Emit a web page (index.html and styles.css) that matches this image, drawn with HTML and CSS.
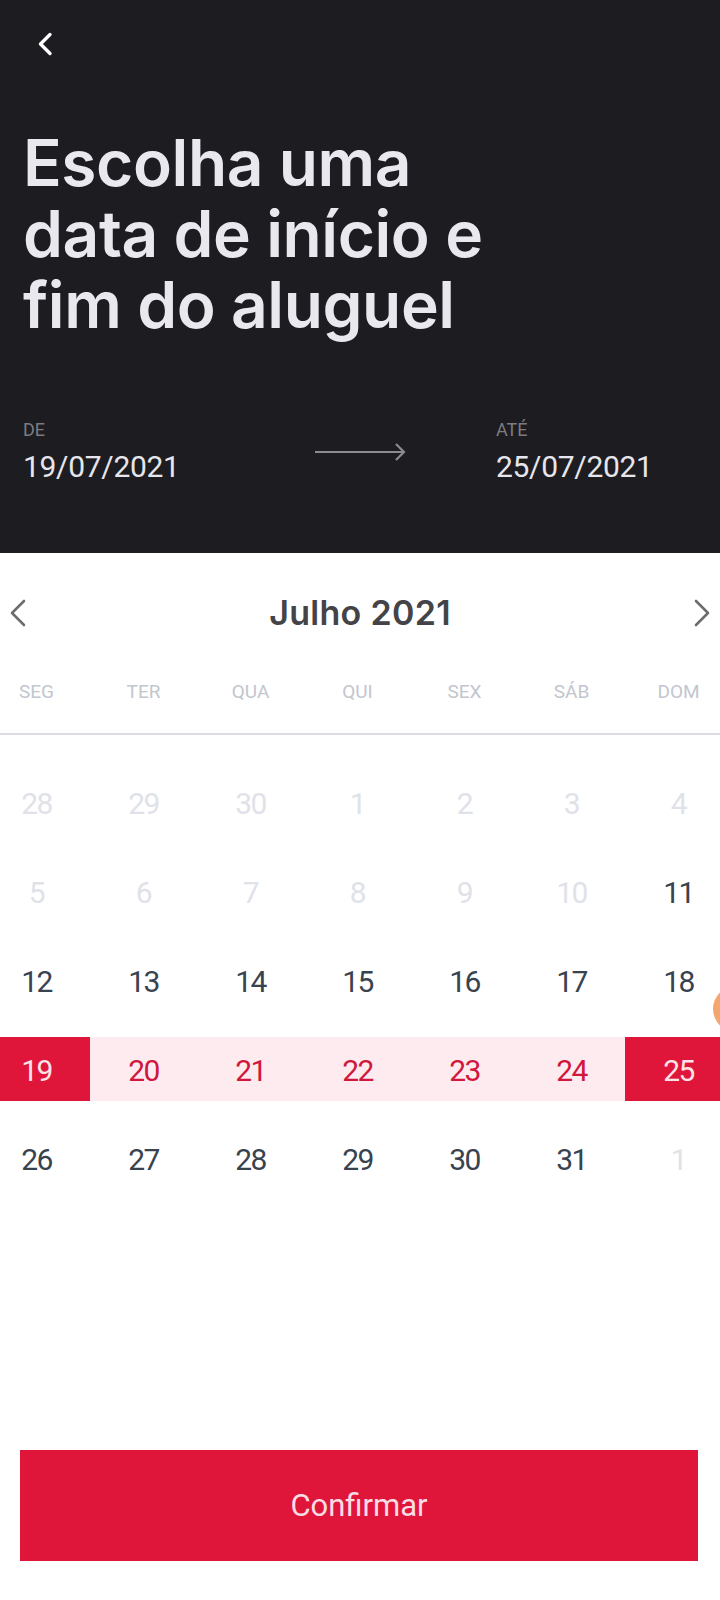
FILE: index.html
```html
<!DOCTYPE html>
<html lang="pt-BR">
<head>
<meta charset="utf-8">
<title>Escolha uma data</title>
<link rel="stylesheet" href="styles.css">
</head>
<body>
<div class="screen">
  <header class="hero">
    <button class="back" aria-label="Voltar">
      <svg width="16" height="24" viewBox="0 0 16 24"><polyline points="13,2.5 3.5,12 13,21.5" fill="none" stroke="#ffffff" stroke-width="3.4" stroke-linecap="round" stroke-linejoin="round"/></svg>
    </button>
    <h1 class="title">Escolha uma<br>data de início e<br>fim do aluguel</h1>
    <div class="range">
      <div class="range-item">
        <span class="range-label">DE</span>
        <span class="range-date">19/07/2021</span>
      </div>
      <div class="range-arrow">
        <svg width="92" height="22" viewBox="0 0 92 22"><line x1="1" y1="11" x2="90" y2="11" stroke="#8c8c90" stroke-width="2.2"/><polyline points="82,3 90,11 82,19" fill="none" stroke="#8c8c90" stroke-width="2.2"/></svg>
      </div>
      <div class="range-item">
        <span class="range-label">ATÉ</span>
        <span class="range-date">25/07/2021</span>
      </div>
    </div>
  </header>

  <section class="calendar">
    <div class="cal-nav">
      <button class="nav-btn" aria-label="Mês anterior">
        <svg width="18" height="28" viewBox="0 0 18 28"><polyline points="15,2 3,14 15,26" fill="none" stroke="#6c6c70" stroke-width="2.6" stroke-linecap="round" stroke-linejoin="round"/></svg>
      </button>
      <h2 class="month">Julho 2021</h2>
      <button class="nav-btn" aria-label="Próximo mês">
        <svg width="18" height="28" viewBox="0 0 18 28"><polyline points="3,2 15,14 3,26" fill="none" stroke="#6c6c70" stroke-width="2.6" stroke-linecap="round" stroke-linejoin="round"/></svg>
      </button>
    </div>

    <div class="weekdays">
      <span>SEG</span><span>TER</span><span>QUA</span><span>QUI</span><span>SEX</span><span>SÁB</span><span>DOM</span>
    </div>
    <div class="divider"></div>

    <div class="days">
      <div class="day muted"><span class="num">28</span></div>
      <div class="day muted"><span class="num">29</span></div>
      <div class="day muted"><span class="num">30</span></div>
      <div class="day muted"><span class="num">1</span></div>
      <div class="day muted"><span class="num">2</span></div>
      <div class="day muted"><span class="num">3</span></div>
      <div class="day muted"><span class="num">4</span></div>

      <div class="day muted"><span class="num">5</span></div>
      <div class="day muted"><span class="num">6</span></div>
      <div class="day muted"><span class="num">7</span></div>
      <div class="day muted"><span class="num">8</span></div>
      <div class="day muted"><span class="num">9</span></div>
      <div class="day muted"><span class="num">10</span></div>
      <div class="day"><span class="num">11</span></div>

      <div class="day"><span class="num">12</span></div>
      <div class="day"><span class="num">13</span></div>
      <div class="day"><span class="num">14</span></div>
      <div class="day"><span class="num">15</span></div>
      <div class="day"><span class="num">16</span></div>
      <div class="day"><span class="num">17</span></div>
      <div class="day"><span class="num">18</span></div>

      <div class="day selected"><span class="num">19</span></div>
      <div class="day in-range"><span class="num">20</span></div>
      <div class="day in-range"><span class="num">21</span></div>
      <div class="day in-range"><span class="num">22</span></div>
      <div class="day in-range"><span class="num">23</span></div>
      <div class="day in-range"><span class="num">24</span></div>
      <div class="day selected"><span class="num">25</span></div>

      <div class="day"><span class="num">26</span></div>
      <div class="day"><span class="num">27</span></div>
      <div class="day"><span class="num">28</span></div>
      <div class="day"><span class="num">29</span></div>
      <div class="day"><span class="num">30</span></div>
      <div class="day"><span class="num">31</span></div>
      <div class="day muted"><span class="num">1</span></div>
    </div>
  </section>

  <div class="footer">
    <button class="confirm">Confirmar</button>
  </div>

  <div class="touch-dot"></div>
</div>
</body>
</html>
```

FILE: styles.css
```css
* {
  box-sizing: border-box;
}

html, body {
  margin: 0;
  padding: 0;
  background: #ffffff;
}

body {
  font-family: Roboto, "Liberation Sans", Arial, sans-serif;
}

.screen {
  position: relative;
  width: 720px;
  height: 1600px;
  overflow: hidden;
  display: flex;
  flex-direction: column;
  background: #ffffff;
}

button {
  font-family: inherit;
  border: 0;
  background: none;
  padding: 0;
  margin: 0;
  cursor: pointer;
}

/* ---------- header ---------- */
.hero {
  height: 553px;
  flex: 0 0 auto;
  background: #1c1c21;
  padding: 32px 0 0 0;
  display: flex;
  flex-direction: column;
}

.back {
  width: 16px;
  height: 24px;
  margin-left: 37px;
  display: block;
}

.back svg {
  display: block;
}

.title {
  margin: 71px 0 0 23px;
  font-family: Inter, "Liberation Sans", sans-serif;
  font-weight: 600;
  font-size: 64px;
  line-height: 71px;
  letter-spacing: -0.4px;
  color: #e8e8ee;
}

.range {
  margin-top: 80px;
  padding-left: 23px;
  display: grid;
  grid-template-columns: 291px 182px auto;
}

.range-item {
  display: flex;
  flex-direction: column;
}

.range-label {
  font-size: 18px;
  line-height: 20px;
  color: #7b7b80;
}

.range-date {
  margin-top: 9px;
  font-size: 30px;
  line-height: 36px;
  color: #e6e6ec;
  letter-spacing: -0.3px;
}

.range-arrow {
  padding-top: 21px;
}

.range-arrow svg {
  display: block;
}

/* ---------- calendar ---------- */
.calendar {
  flex: 1 1 auto;
  display: flex;
  flex-direction: column;
}

.cal-nav {
  margin-top: 30px;
  height: 60px;
  padding: 0 9px 0 9px;
  display: flex;
  align-items: center;
  justify-content: space-between;
}

.nav-btn svg {
  display: block;
}

.month {
  margin: 0;
  font-family: Inter, "Liberation Sans", sans-serif;
  font-weight: 600;
  font-size: 34px;
  line-height: 40px;
  letter-spacing: 0.3px;
  color: #444448;
}

.weekdays {
  margin-top: 28px;
  margin-left: -17px;
  width: 749px;
  height: 40px;
  display: grid;
  grid-template-columns: repeat(7, 107px);
  align-items: center;
}

.weekdays span {
  text-align: center;
  font-size: 19px;
  color: #c2c6ce;
}

.divider {
  margin-top: 22px;
  height: 2px;
  background: #dcdde2;
}

.days {
  margin-top: 24px;
  margin-left: -17px;
  width: 749px;
  display: grid;
  grid-template-columns: repeat(7, 107px);
  grid-auto-rows: 89px;
}

.day {
  display: flex;
  align-items: center;
}

.day .num {
  width: 100%;
  height: 64px;
  margin-top: -4px;
  padding-top: 4px;
  display: flex;
  align-items: center;
  justify-content: center;
  font-size: 30px;
  letter-spacing: -1.5px;
  color: #38434f;
}

.day.muted .num {
  color: #dfe2e8;
}

.day.in-range .num {
  background: #fdebef;
  color: #d0173e;
}

.day.selected .num {
  background: #e0153a;
  color: #fbe3e8;
}

/* ---------- footer ---------- */
.footer {
  flex: 0 0 auto;
  padding: 0 22px 39px 20px;
}

.confirm {
  width: 100%;
  height: 111px;
  background: #e0153a;
  color: #f9dde3;
  font-size: 31px;
  display: flex;
  align-items: center;
  justify-content: center;
}

/* floating touch indicator */
.touch-dot {
  position: absolute;
  left: 713px;
  top: 986px;
  width: 46px;
  height: 46px;
  border-radius: 50%;
  background: #f5a66e;
}
```
